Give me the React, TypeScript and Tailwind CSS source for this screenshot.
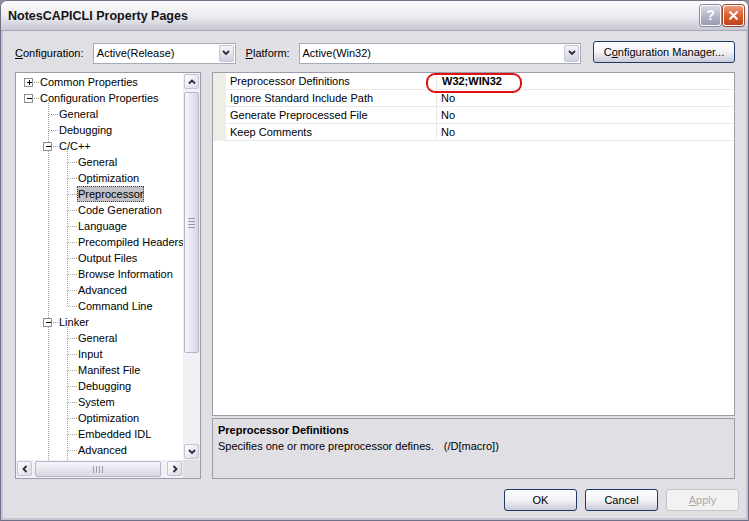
import React from "react";

type Row = { t: string; l: number; box?: "+" | "-"; sel?: boolean };

const rows: Row[] = [
  { t: "Common Properties", l: 0, box: "+" },
  { t: "Configuration Properties", l: 0, box: "-" },
  { t: "General", l: 1 },
  { t: "Debugging", l: 1 },
  { t: "C/C++", l: 1, box: "-" },
  { t: "General", l: 2 },
  { t: "Optimization", l: 2 },
  { t: "Preprocessor", l: 2, sel: true },
  { t: "Code Generation", l: 2 },
  { t: "Language", l: 2 },
  { t: "Precompiled Headers", l: 2 },
  { t: "Output Files", l: 2 },
  { t: "Browse Information", l: 2 },
  { t: "Advanced", l: 2 },
  { t: "Command Line", l: 2 },
  { t: "Linker", l: 1, box: "-" },
  { t: "General", l: 2 },
  { t: "Input", l: 2 },
  { t: "Manifest File", l: 2 },
  { t: "Debugging", l: 2 },
  { t: "System", l: 2 },
  { t: "Optimization", l: 2 },
  { t: "Embedded IDL", l: 2 },
  { t: "Advanced", l: 2 },
  { t: "", l: 2 },
];

const cy = (i: number) => 9 + 16 * i;
const boxX = [13, 32, 51];

function TreeLines() {
  const dot = { stroke: "#a0a0a0", strokeWidth: 1, strokeDasharray: "1 1" };
  const els: React.ReactNode[] = [];
  els.push(<line key="v1" x1={32.5} y1={cy(1) + 5} x2={32.5} y2={400} {...dot} />);
  els.push(<line key="v2a" x1={51.5} y1={cy(4) + 5} x2={51.5} y2={cy(14) + 0.5} {...dot} />);
  els.push(<line key="v2b" x1={51.5} y1={cy(15) + 5} x2={51.5} y2={400} {...dot} />);
  rows.forEach((r, i) => {
    const y = cy(i) + 0.5;
    const cx = boxX[r.l];
    const start = r.box ? cx + 5 : cx + 1;
    els.push(<line key={"h" + i} x1={start} y1={y} x2={cx + 10} y2={y} {...dot} />);
    if (r.box) {
      els.push(
        <g key={"b" + i}>
          <rect x={cx - 4.5} y={cy(i) - 4 + 0.5} width={8} height={8} fill="#fff" stroke="#8e8f8f" />
          <line x1={cx - 2} y1={y} x2={cx + 3} y2={y} stroke="#000" />
          {r.box === "+" && <line x1={cx + 0.5} y1={cy(i) - 2} x2={cx + 0.5} y2={cy(i) + 3} stroke="#000" />}
        </g>
      );
    }
  });
  return (
    <svg className="absolute left-0 top-0 pointer-events-none" width={167} height={387}>
      {els}
    </svg>
  );
}

function Chevron({ dir }: { dir: "up" | "down" | "left" | "right" }) {
  const d =
    dir === "down"
      ? "M1 2 L4 5 L7 2"
      : dir === "up"
      ? "M1 5.5 L4 2.5 L7 5.5"
      : dir === "left"
      ? "M5.5 1 L2.5 4 L5.5 7"
      : "M2.5 1 L5.5 4 L2.5 7";
  return (
    <svg width={8} height={8} viewBox="0 0 8 8">
      <path d={d} fill="none" stroke="#2c2c3c" strokeWidth={1.8} />
    </svg>
  );
}

function ScrollBtn({ dir }: { dir: "up" | "down" | "left" | "right" }) {
  return (
    <div className="w-[17px] h-[17px] p-[1px] shrink-0">
      <div className="w-full h-full rounded-[2px] border border-[#c4c5d6] bg-gradient-to-br from-[#ffffff] to-[#d9dae6] flex items-center justify-center">
        <Chevron dir={dir} />
      </div>
    </div>
  );
}

function Combo({ value, w }: { value: string; w: string }) {
  return (
    <div className={`${w} h-[21px] border border-[#a5acb5] bg-white flex items-center`}>
      <span className="flex-1 pl-[3px] text-black">{value}</span>
      <div className="w-[17px] h-[19px] p-[1px]">
        <div className="w-full h-full rounded-[2px] border border-[#c4c5d6] bg-gradient-to-b from-[#f4f4f8] to-[#d2d3df] flex items-center justify-center">
          <Chevron dir="down" />
        </div>
      </div>
    </div>
  );
}

function Btn({ children, w, disabled }: { children: React.ReactNode; w: string; disabled?: boolean }) {
  return (
    <div
      className={`${w} h-[22px] rounded-[3px] border flex items-center justify-center ${
        disabled
          ? "border-[#c5c5c9] bg-[#f2f2f2] text-[#a8a8ae]"
          : "border-[#1f3a63] bg-gradient-to-b from-[#ffffff] via-[#f2f2f6] to-[#c9cbd9] text-black"
      }`}
    >
      {children}
    </div>
  );
}

export default function App() {
  return (
    <div className="w-[749px] h-[521px] font-['Liberation_Sans',Arial,sans-serif] text-[11px] leading-[13px] text-black bg-[#8d8da2]">
      <div className="w-full h-full flex flex-col rounded-t-[7px] border border-[#6f6f86] bg-[#e0dfe3] overflow-hidden">
        {/* Title bar */}
        <div className="h-[30px] shrink-0 flex items-center pl-[7px] pr-[4px] bg-gradient-to-b from-[#fdfdfe] via-[#ececf1] to-[#c8c8d4] border-b border-[#a6a6b8]">
          <span className="flex-1 font-bold text-[12.5px] text-[#151515] pt-[1px]">NotesCAPICLI Property Pages</span>
          <div className="flex gap-[2px] items-center">
            <div className="w-[21px] h-[21px] rounded-[3px] border border-[#fafafc] bg-gradient-to-b from-[#d8d9e4] to-[#9799ae] flex items-center justify-center text-white font-bold text-[14px] shadow-[0_0_0_1px_#8a8ca2]">
              ?
            </div>
            <div className="w-[21px] h-[21px] rounded-[3px] border border-[#fafafc] bg-gradient-to-b from-[#ef9a7e] via-[#d9602f] to-[#c0401c] flex items-center justify-center shadow-[0_0_0_1px_#9a4a30]">
              <svg width={11} height={11} viewBox="0 0 11 11">
                <path d="M1.5 1.5 L9.5 9.5 M9.5 1.5 L1.5 9.5" stroke="#fff" strokeWidth={2} />
              </svg>
            </div>
          </div>
        </div>

        {/* Body */}
        <div className="flex-1 flex flex-col px-[2px] pb-[2px] border-x-[2px] border-b-[2px] border-[#c4c4d0]">
          <div className="flex-1 flex flex-col pl-[10px] pr-[9px] pt-[11px]">
            {/* Config row */}
            <div className="flex items-center h-[22px]">
              <span className="w-[78px]">
                <span className="underline">C</span>onfiguration:
              </span>
              <Combo value="Active(Release)" w="w-[143px]" />
              <span className="ml-[10px] w-[53px]">
                <span className="underline">P</span>latform:
              </span>
              <Combo value="Active(Win32)" w="w-[283px]" />
              <div className="ml-[12px] -mt-[2px]">
                <Btn w="w-[142px]">
                  C<span className="underline">o</span>nfiguration Manager...
                </Btn>
              </div>
            </div>

            {/* Main panels */}
            <div className="flex gap-[11px] mt-[8px] h-[407px]">
              {/* Tree panel */}
              <div className="w-[186px] h-full border border-[#9d9da8] bg-white flex flex-col">
                <div className="flex h-[387px]">
                  <div className="relative w-[167px] h-full overflow-hidden pt-[1px]">
                    <TreeLines />
                    {rows.map((r, i) => (
                      <div
                        key={i}
                        className={`h-[16px] flex items-center whitespace-nowrap ${
                          r.l === 0 ? "pl-[23px]" : r.l === 1 ? "pl-[42px]" : "pl-[61px]"
                        }`}
                      >
                        <span
                          className={`px-[1px] h-[16px] flex items-center ${
                            r.sel ? "bg-[#c1c1c6] outline outline-1 outline-dotted outline-[#404040] -outline-offset-1" : ""
                          }`}
                        >
                          {r.t}
                        </span>
                      </div>
                    ))}
                  </div>
                  {/* Vertical scrollbar */}
                  <div className="w-[17px] h-full flex flex-col bg-[#f1f1f5]">
                    <ScrollBtn dir="up" />
                    <div className="flex-1 px-[1px] pt-[2px]">
                      <div className="h-[261px] rounded-[2px] border border-[#b4b5c9] bg-gradient-to-r from-[#f7f7fb] to-[#d7d8e5] flex flex-col items-center justify-center gap-[2px]">
                        <div className="w-[7px] h-[1px] bg-[#9a9aae]" />
                        <div className="w-[7px] h-[1px] bg-[#9a9aae]" />
                        <div className="w-[7px] h-[1px] bg-[#9a9aae]" />
                        <div className="w-[7px] h-[1px] bg-[#9a9aae]" />
                      </div>
                    </div>
                    <ScrollBtn dir="down" />
                  </div>
                </div>
                {/* Horizontal scrollbar */}
                <div className="flex h-[18px]">
                  <div className="w-[167px] h-full flex bg-[#f1f1f5]">
                    <ScrollBtn dir="left" />
                    <div className="flex-1 py-[1px] pl-[2px]">
                      <div className="w-[126px] h-full rounded-[2px] border border-[#b4b5c9] bg-gradient-to-b from-[#f7f7fb] to-[#d7d8e5] flex items-center justify-center gap-[2px]">
                        <div className="w-[1px] h-[7px] bg-[#9a9aae]" />
                        <div className="w-[1px] h-[7px] bg-[#9a9aae]" />
                        <div className="w-[1px] h-[7px] bg-[#9a9aae]" />
                        <div className="w-[1px] h-[7px] bg-[#9a9aae]" />
                      </div>
                    </div>
                    <ScrollBtn dir="right" />
                  </div>
                  <div className="w-[17px] h-full bg-[#e0dfe3]" />
                </div>
              </div>

              {/* Right column */}
              <div className="flex-1 flex flex-col gap-[2px]">
                <div className="h-[344px] border border-[#9d9da8] bg-white relative">
                  {[
                    ["Preprocessor Definitions", "W32;WIN32", true],
                    ["Ignore Standard Include Path", "No", false],
                    ["Generate Preprocessed File", "No", false],
                    ["Keep Comments", "No", false],
                  ].map(([n, v, b], i) => (
                    <div key={i} className="flex h-[17px]">
                      <div className="w-[13px] bg-[#efeee6]" />
                      <div className="w-[210px] border-b border-[#e9e9e9] pl-[4px] flex items-center bg-white">
                        {n as string}
                      </div>
                      <div
                        className={`flex-1 border-b border-l border-[#e9e9e9] pl-[4px] flex items-center ${
                          b ? "font-bold pl-[5px]" : ""
                        }`}
                      >
                        {v as string}
                      </div>
                    </div>
                  ))}
                  <div className="absolute left-[213px] top-[0px] w-[96px] h-[20px] rounded-[9px] border-2 border-[#dd1111]" />
                </div>
                <div className="flex-1 border border-[#9d9da8] bg-[#e0dfe3] px-[5px] pt-[3px] leading-[16px]">
                  <div className="font-bold">Preprocessor Definitions</div>
                  <div>
                    Specifies one or more preprocessor defines.<span className="ml-[10px]">(/D[macro])</span>
                  </div>
                </div>
              </div>
            </div>

            {/* Buttons */}
            <div className="flex justify-end gap-[8px] mt-[10px] -mr-[4px]">
              <Btn w="w-[73px]">OK</Btn>
              <Btn w="w-[73px]">Cancel</Btn>
              <Btn w="w-[73px]" disabled>
                <span className="underline">A</span>pply
              </Btn>
            </div>
          </div>
        </div>
      </div>
    </div>
  );
}
